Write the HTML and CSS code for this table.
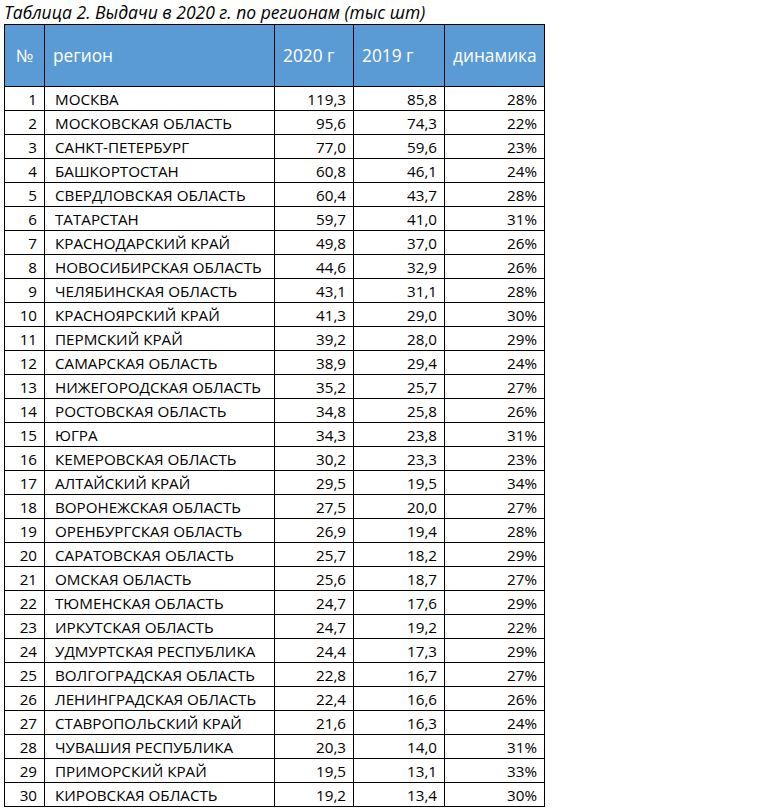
FILE: index.html
```html
<!DOCTYPE html>
<html lang="ru">
<head>
<meta charset="utf-8">
<link rel="stylesheet" href="styles.css">
</head>
<body>
<div class="page">
<div class="caption">Таблица 2. Выдачи в 2020 г. по регионам (тыс шт)</div>
<table class="grid">
<colgroup><col class="c-n"><col class="c-r"><col class="c-a"><col class="c-b"><col class="c-d"></colgroup>
<thead>
<tr><th class="num">№</th><th>регион</th><th>2020 г</th><th>2019 г</th><th>динамика</th></tr>
</thead>
<tbody>
<tr><td>1</td><td class="reg">МОСКВА</td><td>119,3</td><td>85,8</td><td>28%</td></tr>
<tr><td>2</td><td class="reg">МОСКОВСКАЯ ОБЛАСТЬ</td><td>95,6</td><td>74,3</td><td>22%</td></tr>
<tr><td>3</td><td class="reg">САНКТ-ПЕТЕРБУРГ</td><td>77,0</td><td>59,6</td><td>23%</td></tr>
<tr><td>4</td><td class="reg">БАШКОРТОСТАН</td><td>60,8</td><td>46,1</td><td>24%</td></tr>
<tr><td>5</td><td class="reg">СВЕРДЛОВСКАЯ ОБЛАСТЬ</td><td>60,4</td><td>43,7</td><td>28%</td></tr>
<tr><td>6</td><td class="reg">ТАТАРСТАН</td><td>59,7</td><td>41,0</td><td>31%</td></tr>
<tr><td>7</td><td class="reg">КРАСНОДАРСКИЙ КРАЙ</td><td>49,8</td><td>37,0</td><td>26%</td></tr>
<tr><td>8</td><td class="reg">НОВОСИБИРСКАЯ ОБЛАСТЬ</td><td>44,6</td><td>32,9</td><td>26%</td></tr>
<tr><td>9</td><td class="reg">ЧЕЛЯБИНСКАЯ ОБЛАСТЬ</td><td>43,1</td><td>31,1</td><td>28%</td></tr>
<tr><td>10</td><td class="reg">КРАСНОЯРСКИЙ КРАЙ</td><td>41,3</td><td>29,0</td><td>30%</td></tr>
<tr><td>11</td><td class="reg">ПЕРМСКИЙ КРАЙ</td><td>39,2</td><td>28,0</td><td>29%</td></tr>
<tr><td>12</td><td class="reg">САМАРСКАЯ ОБЛАСТЬ</td><td>38,9</td><td>29,4</td><td>24%</td></tr>
<tr><td>13</td><td class="reg">НИЖЕГОРОДСКАЯ ОБЛАСТЬ</td><td>35,2</td><td>25,7</td><td>27%</td></tr>
<tr><td>14</td><td class="reg">РОСТОВСКАЯ ОБЛАСТЬ</td><td>34,8</td><td>25,8</td><td>26%</td></tr>
<tr><td>15</td><td class="reg">ЮГРА</td><td>34,3</td><td>23,8</td><td>31%</td></tr>
<tr><td>16</td><td class="reg">КЕМЕРОВСКАЯ ОБЛАСТЬ</td><td>30,2</td><td>23,3</td><td>23%</td></tr>
<tr><td>17</td><td class="reg">АЛТАЙСКИЙ КРАЙ</td><td>29,5</td><td>19,5</td><td>34%</td></tr>
<tr><td>18</td><td class="reg">ВОРОНЕЖСКАЯ ОБЛАСТЬ</td><td>27,5</td><td>20,0</td><td>27%</td></tr>
<tr><td>19</td><td class="reg">ОРЕНБУРГСКАЯ ОБЛАСТЬ</td><td>26,9</td><td>19,4</td><td>28%</td></tr>
<tr><td>20</td><td class="reg">САРАТОВСКАЯ ОБЛАСТЬ</td><td>25,7</td><td>18,2</td><td>29%</td></tr>
<tr><td>21</td><td class="reg">ОМСКАЯ ОБЛАСТЬ</td><td>25,6</td><td>18,7</td><td>27%</td></tr>
<tr><td>22</td><td class="reg">ТЮМЕНСКАЯ ОБЛАСТЬ</td><td>24,7</td><td>17,6</td><td>29%</td></tr>
<tr><td>23</td><td class="reg">ИРКУТСКАЯ ОБЛАСТЬ</td><td>24,7</td><td>19,2</td><td>22%</td></tr>
<tr><td>24</td><td class="reg">УДМУРТСКАЯ РЕСПУБЛИКА</td><td>24,4</td><td>17,3</td><td>29%</td></tr>
<tr><td>25</td><td class="reg">ВОЛГОГРАДСКАЯ ОБЛАСТЬ</td><td>22,8</td><td>16,7</td><td>27%</td></tr>
<tr><td>26</td><td class="reg">ЛЕНИНГРАДСКАЯ ОБЛАСТЬ</td><td>22,4</td><td>16,6</td><td>26%</td></tr>
<tr><td>27</td><td class="reg">СТАВРОПОЛЬСКИЙ КРАЙ</td><td>21,6</td><td>16,3</td><td>24%</td></tr>
<tr><td>28</td><td class="reg">ЧУВАШИЯ РЕСПУБЛИКА</td><td>20,3</td><td>14,0</td><td>31%</td></tr>
<tr><td>29</td><td class="reg">ПРИМОРСКИЙ КРАЙ</td><td>19,5</td><td>13,1</td><td>33%</td></tr>
<tr><td>30</td><td class="reg">КИРОВСКАЯ ОБЛАСТЬ</td><td>19,2</td><td>13,4</td><td>30%</td></tr>
</tbody>
</table>
</div>
</body>
</html>
```

FILE: styles.css
```css
html, body {
  margin: 0;
  padding: 0;
  background: #ffffff;
}
.page {
  padding: 0 0 0 4px;
  font-family: "Open Sans", "Noto Sans", sans-serif;
  color: #000;
}
.caption {
  font-style: italic;
  font-size: 17.5px;
  line-height: 24px;
  height: 24px;
  white-space: nowrap;
}
.grid {
  border-collapse: collapse;
  table-layout: fixed;
  width: 540px;
  font-size: 15.2px;
}
.c-n { width: 40px; }
.c-r { width: 230px; }
.c-a { width: 79px; }
.c-b { width: 91px; }
.c-d { width: 100px; }
.grid th {
  background: #5b9bd5;
  color: #ffffff;
  font-weight: normal;
  font-size: 17.3px;
  text-align: left;
  height: 61px;
  padding: 0 0 0 8px;
  border: 1px solid #000;
  vertical-align: middle;
  white-space: nowrap;
}
.grid th.num {
  text-align: center;
  padding: 0;
}
.grid td {
  height: 23px;
  padding: 0 7px 0 0;
  border: 1px solid #000;
  text-align: right;
  vertical-align: bottom;
  line-height: 21px;
  white-space: nowrap;
}
.grid td.reg {
  text-align: left;
  padding: 0 0 0 10px;
}
```
